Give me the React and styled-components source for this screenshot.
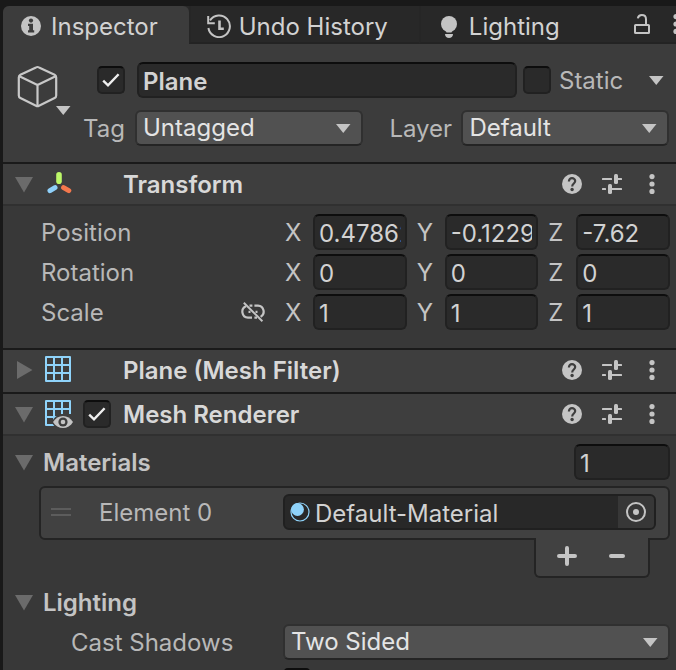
import { useState } from 'react';
import styled, { createGlobalStyle, css } from 'styled-components';

const GlobalStyle = createGlobalStyle`
  * {
    box-sizing: border-box;
  }
  body {
    margin: 0;
    overflow: hidden;
    background: #191919;
  }
  body, button, input, select {
    font-family: Inter, "Liberation Sans", sans-serif;
    font-size: 24px;
    line-height: 32px;
    color: #c4c4c4;
  }
  svg {
    display: block;
    flex: none;
  }
`;

/* ---------- layout ---------- */

const Window = styled.div`
  display: flex;
  flex-direction: column;
  height: 100vh;
  padding: 6px 0 0 3px;
  overflow: hidden;
`;

const TabBar = styled.div`
  display: flex;
  flex: none;
  height: 38px;
  background: #282828;
  border-radius: 6px 0 0 0;
`;

const Tab = styled.button`
  display: flex;
  align-items: center;
  gap: 8px;
  padding: 4px 31px 0 16px;
  border: 0;
  border-left: 2px solid #262626;
  border-bottom: 2px solid #232323;
  background: transparent;
  color: #d2d2d2;
  white-space: nowrap;
  ${props => props.$active && css`
    padding-bottom: 2px;
    border: 0;
    border-radius: 6px 6px 0 0;
    background: #3c3c3c;
  `}
`;

const TabText = styled.span`
  padding-top: 2px;
`;

const TabTools = styled.div`
  display: flex;
  flex: 1;
  align-items: center;
  justify-content: flex-end;
  gap: 14px;
  margin-right: -10px;
  border-bottom: 2px solid #232323;
`;

const Panel = styled.main`
  flex: 1;
  background: #383838;
`;

const ObjectHeader = styled.header`
  display: flex;
  gap: 12px;
  padding: 18px 6px 16px 14px;
  background: #3c3c3c;
`;

const ObjectIcon = styled.button`
  position: relative;
  display: flex;
  align-items: flex-start;
  width: 54px;
  height: 56px;
  padding: 3px 0 0;
  border: 0;
  background: transparent;
  svg + svg {
    position: absolute;
    right: 0;
    bottom: 3px;
  }
`;

const ObjectFields = styled.div`
  display: flex;
  flex: 1;
  flex-direction: column;
  gap: 12px;
`;

const NameRow = styled.div`
  display: flex;
  align-items: center;
  padding-left: 14px;
`;

const ToggleGap = styled.span`
  width: 12px;
`;

const StaticGroup = styled.div`
  display: flex;
  align-items: center;
  width: 153px;
  padding: 0 4px 0 6px;
  label {
    flex: 1;
    padding: 2px 0 0 8px;
    color: #b8b8b8;
  }
`;

const TagRow = styled.div`
  display: flex;
  align-items: center;
  padding-right: 1px;
`;

const TagLabel = styled.label`
  width: ${props => props.$width}px;
  padding-top: 2px;
  color: #b8b8b8;
`;

const LayerGap = styled.span`
  width: 26px;
`;

const Component = styled.section`
  border-top: 2px solid #1a1a1a;
`;

const ComponentHeader = styled.div`
  display: flex;
  align-items: center;
  gap: 10px;
  height: 42px;
  padding: 0 14px 0 12px;
  border-bottom: 2px solid ${props => (props.$open ? '#303030' : '#3e3e3e')};
  background: #3e3e3e;
`;

const Title = styled.h2`
  flex: 1;
  margin: 0;
  padding: 2px 0 0 2px;
  font-size: 24px;
  font-weight: 600;
  color: #d8d8d8;
`;

const ToggleSlot = styled.div`
  width: 28px;
`;

const HeaderTools = styled.div`
  display: flex;
  gap: 20px;
`;

const ComponentBody = styled.div`
  display: flex;
  flex-direction: column;
  gap: 4px;
  padding: 8px 6px ${props => props.$bottom || 0}px 0;
`;

const Row = styled.div`
  display: flex;
  align-items: center;
  height: 36px;
`;

const PropLabel = styled.span`
  flex: none;
  width: ${props => props.$width || 280}px;
  padding: 2px 0 0 ${props => props.$indent}px;
  color: #b8b8b8;
`;

const VectorLabel = styled.span`
  display: flex;
  align-items: center;
  justify-content: space-between;
  width: 282px;
  padding: 0 20px 0 38px;
  color: #b8b8b8;
  span {
    padding-top: 2px;
  }
`;

const VectorFields = styled.div`
  display: flex;
  flex: 1;
  gap: 10px;
`;

const Axis = styled.label`
  display: flex;
  flex: 1;
  align-items: center;
  min-width: 0;
  span {
    flex: none;
    width: 28px;
    padding-top: 2px;
  }
`;

const FoldRow = styled(Row)`
  gap: 8px;
  padding-left: 12px;
`;

const FoldTitle = styled.h3`
  flex: 1;
  margin: 0;
  padding-top: 2px;
  font-size: 24px;
  font-weight: 600;
  color: #c4c4c4;
`;

/* ---------- controls ---------- */

const IconButton = styled.button`
  display: flex;
  align-items: center;
  justify-content: center;
  min-width: 20px;
  height: 20px;
  padding: 0;
  border: 0;
  background: transparent;
`;

const TextField = styled.input`
  flex: ${props => (props.$width ? 'none' : '1')};
  width: ${props => (props.$width ? `${props.$width}px` : '0')};
  min-width: 0;
  height: 36px;
  padding: 2px 4px 0;
  border: 2px solid #212121;
  border-top-color: #0d0d0d;
  border-radius: 6px;
  outline: 0;
  background: #2a2a2a;
  color: #d2d2d2;
  font-weight: ${props => (props.$bold ? 600 : 400)};
`;

const CheckFrame = styled.span`
  position: relative;
  display: block;
  flex: none;
  width: 28px;
  height: 28px;
  svg {
    position: absolute;
    inset: 0;
    pointer-events: none;
  }
`;

const CheckInput = styled.input`
  appearance: none;
  display: block;
  width: 28px;
  height: 28px;
  margin: 0;
  border: 2px solid #212121;
  border-top-color: #0d0d0d;
  border-radius: 5px;
  background: #2a2a2a;
`;

const SelectFrame = styled.span`
  position: relative;
  flex: ${props => props.$grow || 1} 1 0;
  min-width: 0;
  svg {
    position: absolute;
    top: 14px;
    right: 12px;
    pointer-events: none;
  }
`;

const SelectInput = styled.select`
  appearance: none;
  display: block;
  width: 100%;
  height: 36px;
  padding: 0 32px 2px 6px;
  border: 2px solid #303030;
  border-bottom-color: #242424;
  border-radius: 6px;
  outline: 0;
  background: #515151;
  color: #e4e4e4;
`;

/* ---------- materials list ---------- */

const List = styled.div`
  display: flex;
  align-items: flex-start;
  height: 54px;
  margin: 2px 0 0 36px;
  padding: 6px 12px 0 10px;
  border: 2px solid #242424;
  border-radius: 6px;
  background: #414141;
`;

const ListLabel = styled(PropLabel)`
  line-height: 36px;
  padding-top: 1px;
`;

const ListFooter = styled.div`
  display: flex;
  align-items: center;
  align-self: flex-end;
  justify-content: center;
  gap: 30px;
  width: 116px;
  height: 40px;
  margin: -6px 20px 2px 0;
  padding-bottom: 2px;
  border: 2px solid #242424;
  border-top: 0;
  border-radius: 0 0 6px 6px;
  background: #414141;
  z-index: 1;
`;

const DragHandle = styled.span`
  width: 20px;
  height: 8px;
  margin: 14px 0;
  border: solid #5c5c5c;
  border-width: 2px 0;
`;

const ObjectField = styled.div`
  display: flex;
  flex: 1;
  align-items: center;
  height: 36px;
  padding-left: 5px;
  overflow: hidden;
  border: 2px solid #202020;
  border-radius: 6px;
  background: #282828;
  color: #d2d2d2;
`;

const ObjectName = styled.span`
  flex: 1;
  padding: 4px 0 0 5px;
`;

const PickerButton = styled.button`
  display: flex;
  align-items: center;
  justify-content: center;
  width: 36px;
  height: 32px;
  padding: 0;
  border: 0;
  background: #373737;
`;

/* ---------- icons ---------- */

const InfoIcon = () => (
  <svg width="24" height="24" viewBox="0 0 24 24">
    <circle cx="12" cy="12" r="10" fill="#c4c4c4" />
    <circle cx="12" cy="6.6" r="2.1" fill="#3c3c3c" />
    <path d="M9 9.8h5v6.4h1.200v2.200H9v-2.200h1.200v-4.200H9z" fill="#3c3c3c" />
  </svg>
);

const HistoryIcon = () => (
  <svg width="24" height="24" viewBox="0 0 24 24" fill="none" stroke="#c4c4c4" strokeWidth="2">
    <path d="M3 6.4A10.8 10.8 0 1 1 1.4 14" />
    <path d="M1.2 2v7.2h6.6" />
    <path d="M12.5 6.5v8.3h4.3" strokeWidth="2.6" />
  </svg>
);

const BulbIcon = () => (
  <svg width="24" height="24" viewBox="0 0 24 24" fill="#c4c4c4">
    <circle cx="12" cy="10" r="8" />
    <path d="M8 14h8l-1.500 4.600h-5z" />
    <path d="M8 20h8c0 2.500-1.800 4-4 4s-4-1.500-4-4z" />
  </svg>
);

const LockIcon = () => (
  <svg width="20" height="24" viewBox="0 0 20 24" fill="none" stroke="#c4c4c4" strokeWidth="2">
    <rect x="3" y="13" width="14" height="8" rx="0.6" />
    <path d="M5.800 6.400C6.400 3.600 8 3 9.800 3c2.600 0 4.200 1.700 4.200 4.200V13" />
  </svg>
);

const CubeIcon = () => (
  <svg width="41" height="43" viewBox="0 0 41 43" fill="none" stroke="#c8c8c8" strokeWidth="2.200" strokeLinejoin="round">
    <path d="M19 2.400Q20.500 1.600 22 2.400L37.600 9.800Q39.200 10.600 39.200 12.400V30.400Q39.200 32.200 37.600 33L22 40.800Q20.500 41.600 19 40.800L3.400 33Q1.800 32.200 1.800 30.400V12.400Q1.800 10.600 3.400 9.800z" />
    <path d="M2.400 11.200L20.500 20l18.100-8.800M20.500 20v21" />
  </svg>
);

const CaretIcon = () => (
  <svg width="15" height="9" viewBox="0 0 15 9">
    <path d="M0 0h14.500L7.250 9z" fill="#c4c4c4" />
  </svg>
);

const FoldIcon = ({ open }) => (
  <svg width="20" height="20" viewBox="0 0 20 20">
    <path d={open ? 'M0 3h18L9 18.500z' : 'M2 1v18l15.500-9z'} fill="#6b6b6b" />
  </svg>
);

const TransformIcon = () => (
  <svg width="28" height="28" viewBox="0 0 28 28" strokeLinecap="round" strokeWidth="5.600">
    <path d="M14 4.800v6.400" stroke="#bdf869" />
    <path d="M10 17.600l-5 3" stroke="#8fd0fa" strokeWidth="5" />
    <path d="M18.600 17.600l5.200 3" stroke="#f4784d" strokeWidth="5" />
  </svg>
);

const MeshGrid = () => (
  <path d="M1 1h24v24H1zM9 1v24M17 1v24M1 9h24M1 17h24" fill="none" stroke="#8fd3fa" strokeWidth="2" strokeLinejoin="round" />
);

const MeshFilterIcon = () => (
  <svg width="28" height="28" viewBox="0 0 28 28">
    <MeshGrid />
  </svg>
);

const MeshRendererIcon = () => (
  <svg width="28" height="28" viewBox="0 0 28 28">
    <MeshGrid />
    <path d="M6.500 22C10 16 14 14 18 14h10v14H12c-2-1-4-3-5.500-6z" fill="#3e3e3e" />
    <path d="M8 22c2.400-4 6-6 10-6s7.600 2 10 6c-2.400 4-6 6-10 6s-7.600-2-10-6z" fill="#c4c4c4" />
    <circle cx="18" cy="22" r="4.600" fill="#3e3e3e" />
    <circle cx="18" cy="22" r="2.300" fill="#c4c4c4" />
  </svg>
);

const CheckIcon = () => (
  <svg width="28" height="28" viewBox="0 0 28 28" fill="none" stroke="#eeeeee" strokeWidth="2.400">
    <path d="M6.200 14.600l4.800 4.800L21.600 8.200" />
  </svg>
);

const HelpIcon = () => (
  <svg width="20" height="20" viewBox="0 0 20 20">
    <circle cx="10" cy="10" r="10" fill="#c4c4c4" />
    <path d="M6.900 7.400C6.900 5.300 8.200 4.200 10 4.200s3.200 1.100 3.200 2.900c0 2.300-3 2.500-3 5.300" fill="none" stroke="#3e3e3e" strokeWidth="2.200" />
    <circle cx="10.100" cy="15.500" r="1.700" fill="#3e3e3e" />
  </svg>
);

const PresetIcon = () => (
  <svg width="20" height="20" viewBox="0 0 20 20" fill="#c4c4c4">
    <rect x="0" y="4" width="10" height="2" rx="0.500" />
    <rect x="12" y="0" width="4" height="10" rx="1.500" />
    <rect x="15" y="4" width="5" height="2" rx="0.500" />
    <rect x="0" y="14" width="4" height="2" rx="0.500" />
    <rect x="6" y="10" width="4" height="10" rx="1.500" />
    <rect x="9" y="14" width="11" height="2" rx="0.500" />
  </svg>
);

const MenuIcon = () => (
  <svg width="20" height="20" viewBox="0 0 20 20" fill="#c4c4c4">
    <circle cx="10" cy="2.600" r="2.600" />
    <circle cx="10" cy="10" r="2.600" />
    <circle cx="10" cy="17.400" r="2.600" />
  </svg>
);

const UnlinkIcon = () => (
  <svg width="24" height="20" viewBox="0 0 24 20" fill="none" stroke="#c4c4c4" strokeWidth="2.200">
    <path d="M5 4.200A6 6 0 0 0 7 15.700h4M8.500 3.700h2.900M13.400 3.700H17a6 6 0 0 1 2.600 11.200M13.400 15.700h2.600" />
    <path d="M7.500 9.800h2M14.500 9.800h2" />
    <path d="M2.800 0.800L21.400 19.200" strokeWidth="2" />
  </svg>
);

const MaterialIcon = () => (
  <svg width="20" height="20" viewBox="0 0 20 20">
    <circle cx="10" cy="10" r="9" fill="none" stroke="#8fd3fa" strokeWidth="1.200" />
    <circle cx="7.500" cy="7.500" r="6.400" fill="#8fd3fa" />
  </svg>
);

const PickerIcon = () => (
  <svg width="20" height="20" viewBox="0 0 20 20">
    <circle cx="10" cy="10" r="9" fill="none" stroke="#c4c4c4" strokeWidth="2" />
    <circle cx="10" cy="10" r="3" fill="#c4c4c4" />
  </svg>
);

const PlusIcon = () => (
  <svg width="20" height="20" viewBox="0 0 20 20" stroke="#c4c4c4" strokeWidth="4" strokeLinecap="round">
    <path d="M2 10h16M10 2v16" />
  </svg>
);

const MinusIcon = () => (
  <svg width="20" height="20" viewBox="0 0 20 20" stroke="#c4c4c4" strokeWidth="4" strokeLinecap="round">
    <path d="M4 10h12" />
  </svg>
);

/* ---------- parts ---------- */

function Checkbox({ defaultChecked = false, ...rest }) {
  const [checked, setChecked] = useState(defaultChecked);
  return (
    <CheckFrame>
      <CheckInput type="checkbox" checked={checked} onChange={e => setChecked(e.target.checked)} {...rest} />
      {checked && <CheckIcon />}
    </CheckFrame>
  );
}

function Select({ id, options, grow }) {
  return (
    <SelectFrame $grow={grow}>
      <SelectInput id={id}>
        {options.map(option => <option key={option}>{option}</option>)}
      </SelectInput>
      <CaretIcon />
    </SelectFrame>
  );
}

function ComponentSection({ title, icon, toggle, defaultOpen = true, bottom, children }) {
  const [open, setOpen] = useState(defaultOpen);
  return (
    <Component>
      <ComponentHeader $open={open}>
        <IconButton aria-label={`Fold ${title}`} aria-expanded={open} onClick={() => setOpen(!open)}>
          <FoldIcon open={open} />
        </IconButton>
        {icon}
        <ToggleSlot>{toggle && <Checkbox defaultChecked aria-label={`Enable ${title}`} />}</ToggleSlot>
        <Title>{title}</Title>
        <HeaderTools>
          <IconButton aria-label="Help"><HelpIcon /></IconButton>
          <IconButton aria-label="Presets"><PresetIcon /></IconButton>
          <IconButton aria-label="More"><MenuIcon /></IconButton>
        </HeaderTools>
      </ComponentHeader>
      {open && children && <ComponentBody $bottom={bottom}>{children}</ComponentBody>}
    </Component>
  );
}

function VectorRow({ label, values, linkable }) {
  return (
    <Row>
      <VectorLabel>
        <span>{label}</span>
        {linkable && <IconButton aria-label="Constrain proportions"><UnlinkIcon /></IconButton>}
      </VectorLabel>
      <VectorFields>
        {['X', 'Y', 'Z'].map((axis, i) => (
          <Axis key={axis}>
            <span>{axis}</span>
            <TextField defaultValue={values[i]} />
          </Axis>
        ))}
      </VectorFields>
    </Row>
  );
}

function App() {
  return (
    <Window>
      <GlobalStyle />
      <TabBar>
        <Tab $active><InfoIcon /><TabText>Inspector</TabText></Tab>
        <Tab><HistoryIcon /><TabText>Undo History</TabText></Tab>
        <Tab><BulbIcon /><TabText>Lighting</TabText></Tab>
        <TabTools>
          <IconButton aria-label="Lock"><LockIcon /></IconButton>
          <IconButton aria-label="Window menu"><MenuIcon /></IconButton>
        </TabTools>
      </TabBar>

      <Panel>
        <ObjectHeader>
          <ObjectIcon aria-label="Object icon"><CubeIcon /><CaretIcon /></ObjectIcon>
          <ObjectFields>
            <NameRow>
              <Checkbox defaultChecked aria-label="Active" />
              <ToggleGap />
              <TextField $bold defaultValue="Plane" aria-label="Name" />
              <StaticGroup>
                <Checkbox id="static" />
                <label htmlFor="static">Static</label>
                <IconButton aria-label="Static flags"><CaretIcon /></IconButton>
              </StaticGroup>
            </NameRow>
            <TagRow>
              <TagLabel htmlFor="tag" $width={52}>Tag</TagLabel>
              <Select id="tag" grow={11} options={['Untagged', 'Respawn', 'Player']} />
              <LayerGap />
              <TagLabel htmlFor="layer" $width={72}>Layer</TagLabel>
              <Select id="layer" grow={10} options={['Default', 'Water', 'UI']} />
            </TagRow>
          </ObjectFields>
        </ObjectHeader>

        <ComponentSection title="Transform" icon={<TransformIcon />} bottom={18}>
          <VectorRow label="Position" values={['0.47862', '-0.12294', '-7.62']} />
          <VectorRow label="Rotation" values={['0', '0', '0']} />
          <VectorRow label="Scale" values={['1', '1', '1']} linkable />
        </ComponentSection>

        <ComponentSection title="Plane (Mesh Filter)" icon={<MeshFilterIcon />} defaultOpen={false} />

        <ComponentSection title="Mesh Renderer" icon={<MeshRendererIcon />} toggle>
          <FoldRow>
            <IconButton aria-label="Fold Materials"><FoldIcon open /></IconButton>
            <FoldTitle>Materials</FoldTitle>
            <TextField $width={96} defaultValue="1" aria-label="Materials count" />
          </FoldRow>
          <List>
            <DragHandle />
            <ListLabel $width={212} $indent={28}>Element 0</ListLabel>
            <ObjectField>
              <MaterialIcon />
              <ObjectName>Default-Material</ObjectName>
              <PickerButton aria-label="Pick material"><PickerIcon /></PickerButton>
            </ObjectField>
          </List>
          <ListFooter>
            <IconButton aria-label="Add"><PlusIcon /></IconButton>
            <IconButton aria-label="Remove"><MinusIcon /></IconButton>
          </ListFooter>
          <FoldRow>
            <IconButton aria-label="Fold Lighting"><FoldIcon open /></IconButton>
            <FoldTitle>Lighting</FoldTitle>
          </FoldRow>
          <Row>
            <PropLabel as="label" htmlFor="cast-shadows" $indent={68}>Cast Shadows</PropLabel>
            <Select id="cast-shadows" options={['Two Sided', 'On', 'Off', 'Shadows Only']} />
          </Row>
          <Row>
            <PropLabel $indent={68} />
            <Checkbox aria-label="Static shadow caster" />
          </Row>
        </ComponentSection>
      </Panel>
    </Window>
  );
}

export default App;
